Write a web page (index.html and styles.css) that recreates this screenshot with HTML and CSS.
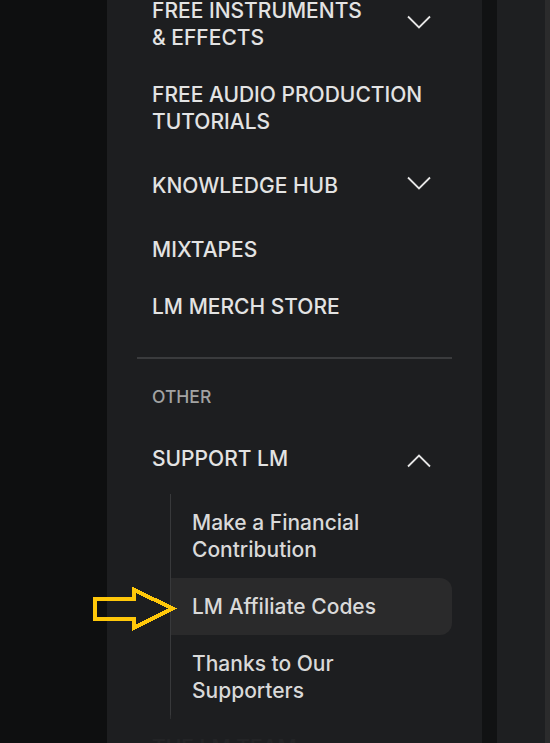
FILE: index.html
```html
<!DOCTYPE html>
<html lang="en">
<head>
<meta charset="utf-8">
<title>Menu</title>
<link rel="stylesheet" href="styles.css">
</head>
<body>
<div class="page">
  <div class="backdrop"></div>
  <aside class="panel">
    <nav class="nav">
      <div class="item">
        <span class="label">Free Instruments<br>&amp; Effects</span>
        <span class="toggle down"><svg width="24" height="14" viewBox="0 0 24 14"><polyline points="1,1.5 12,12.5 23,1.5" /></svg></span>
      </div>
      <div class="item">
        <span class="label">Free Audio Production<br>Tutorials</span>
      </div>
      <div class="item">
        <span class="label">Knowledge Hub</span>
        <span class="toggle down"><svg width="24" height="14" viewBox="0 0 24 14"><polyline points="1,1.5 12,12.5 23,1.5" /></svg></span>
      </div>
      <div class="item">
        <span class="label">Mixtapes</span>
      </div>
      <div class="item">
        <span class="label">LM Merch Store</span>
      </div>

      <div class="divider"></div>
      <div class="section">Other</div>

      <div class="item">
        <span class="label">Support LM</span>
        <span class="toggle up"><svg width="24" height="14" viewBox="0 0 24 14"><polyline points="1,12.5 12,1.5 23,12.5" /></svg></span>
      </div>
      <div class="sub">
        <div class="sub-item">Make a Financial<br>Contribution</div>
        <div class="sub-item active">LM Affiliate Codes</div>
        <div class="sub-item">Thanks to Our<br>Supporters</div>
      </div>
      <div class="item">
        <span class="label">The LM Team</span>
      </div>
    </nav>
    <div class="fade"></div>
  </aside>
  <div class="strip"></div>
  <div class="right"></div>

  <svg class="pointer" width="90" height="50" viewBox="90 584 90 50">
    <polygon points="95,599 133.5,599 133.5,589.5 172.5,608.5 133.5,628 133.5,619 95,619" />
  </svg>
</div>
</body>
</html>
```

FILE: styles.css
```css
html, body {
  margin: 0;
  padding: 0;
  background: #0e0f10;
  overflow: hidden;
}

.page {
  position: relative;
  display: flex;
  height: 743px;
  width: 550px;
  overflow: hidden;
  font-family: Inter, "Noto Sans", "Liberation Sans", sans-serif;
}

.backdrop {
  width: 107px;
  flex: none;
  background: #0e0f10;
}

.panel {
  position: relative;
  width: 315px;
  flex: none;
  padding: 0 30px;
  background: #1d1e20;
  overflow: hidden;
}

.strip {
  width: 15px;
  flex: none;
  background: #111213;
}

.right {
  flex: 1;
  background: #1e1f21;
  border-right: 5px solid #2b2b2c;
}

.nav {
  margin-top: -18px;
  display: flex;
  flex-direction: column;
}

.item {
  display: flex;
  align-items: center;
  justify-content: space-between;
  padding: 15px 0 15px 15px;
  font-size: 21px;
  line-height: 27px;
  font-weight: 500;
  text-transform: uppercase;
  color: #e3e3e3;
  letter-spacing: 0;
}

.toggle {
  width: 41px;
  height: 41px;
  margin-right: 13px;
  display: flex;
  align-items: center;
  justify-content: center;
  flex: none;
}

.toggle svg polyline {
  fill: none;
  stroke: #e6e6e6;
  stroke-width: 1.8;
}

.toggle.down svg {
  margin-bottom: 5px;
}

.toggle.up svg {
  margin-top: 5px;
}

.divider {
  height: 2px;
  background: #3a3b3d;
  margin-top: 22px;
}

.section {
  margin-top: 28px;
  margin-bottom: 16px;
  padding-left: 15px;
  font-size: 17.5px;
  line-height: 20px;
  font-weight: 500;
  text-transform: uppercase;
  color: #a3a3a3;
}

.sub {
  margin-left: 33px;
  border-left: 1px solid #38393b;
  display: flex;
  flex-direction: column;
}

.sub-item {
  padding: 15px 0 15px 21px;
  font-size: 21px;
  line-height: 27px;
  font-weight: 500;
  color: #d9d9d9;
  border-radius: 0 12px 12px 0;
}

.sub-item.active {
  background: #2a2a2b;
}

.fade {
  position: absolute;
  left: 0;
  right: 0;
  bottom: 0;
  height: 28px;
  background: linear-gradient(to bottom, rgba(29, 30, 32, 0.2), rgba(29, 30, 32, 0.97) 55%);
}

.pointer {
  position: absolute;
  left: 90px;
  top: 584px;
}

.pointer polygon {
  fill: none;
  stroke: #ffc80a;
  stroke-width: 4;
  stroke-linejoin: miter;
  shape-rendering: crispEdges;
}
```
